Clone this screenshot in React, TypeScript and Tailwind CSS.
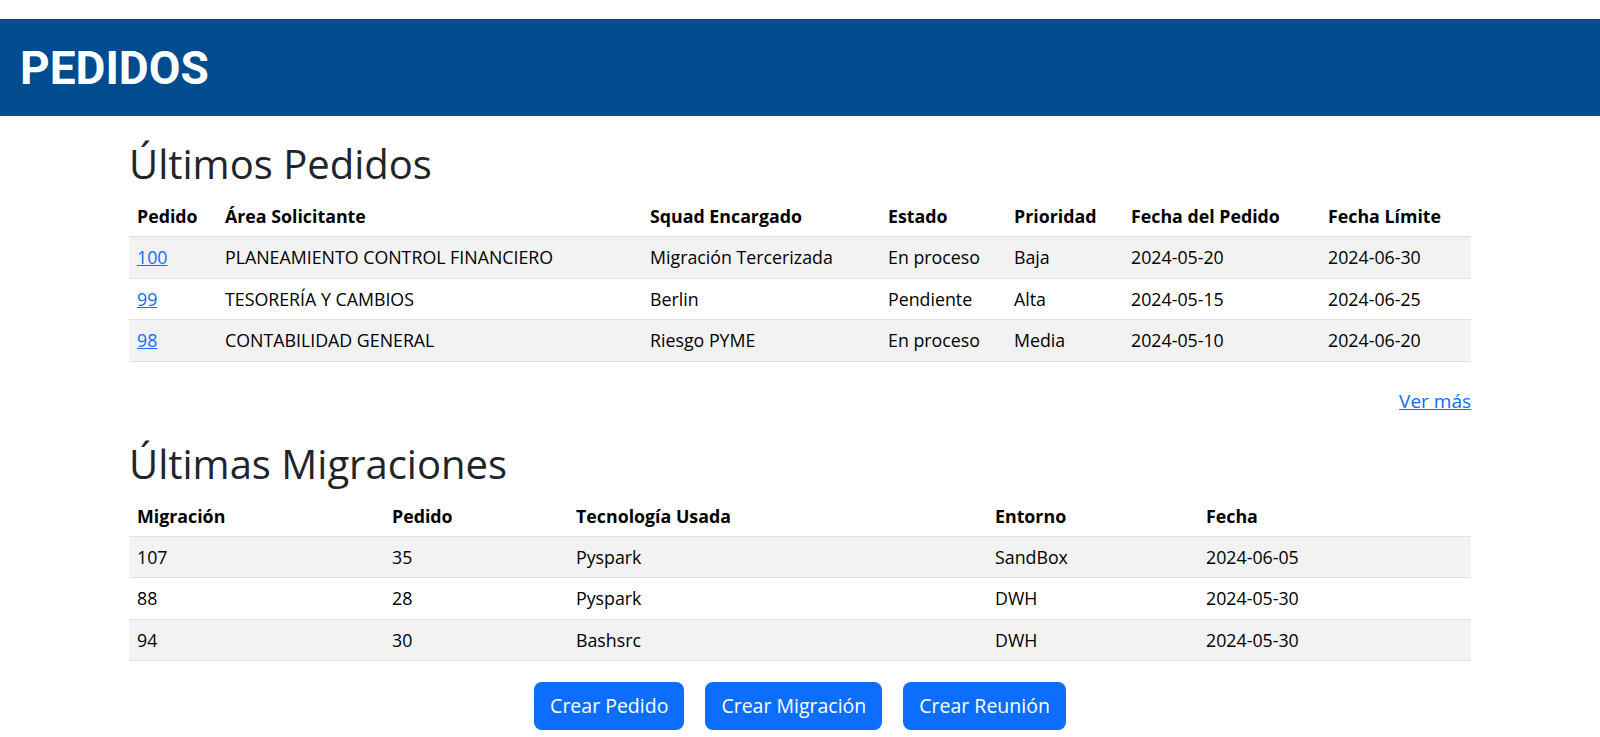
import React from 'react'

const bodyFont = "font-['Open_Sans','Noto_Sans',sans-serif]"

type Col = { label: string; width: string }

const pedidoCols: Col[] = [
  { label: 'Pedido', width: 'w-[88px]' },
  { label: 'Área Solicitante', width: 'w-[425px]' },
  { label: 'Squad Encargado', width: 'w-[238px]' },
  { label: 'Estado', width: 'w-[126px]' },
  { label: 'Prioridad', width: 'w-[117px]' },
  { label: 'Fecha del Pedido', width: 'w-[197px]' },
  { label: 'Fecha Límite', width: 'w-[151px]' },
]

const pedidos = [
  ['100', 'PLANEAMIENTO CONTROL FINANCIERO', 'Migración Tercerizada', 'En proceso', 'Baja', '2024-05-20', '2024-06-30'],
  ['99', 'TESORERÍA Y CAMBIOS', 'Berlin', 'Pendiente', 'Alta', '2024-05-15', '2024-06-25'],
  ['98', 'CONTABILIDAD GENERAL', 'Riesgo PYME', 'En proceso', 'Media', '2024-05-10', '2024-06-20'],
]

const migracionCols: Col[] = [
  { label: 'Migración', width: 'w-[255px]' },
  { label: 'Pedido', width: 'w-[184px]' },
  { label: 'Tecnología Usada', width: 'w-[419px]' },
  { label: 'Entorno', width: 'w-[211px]' },
  { label: 'Fecha', width: 'w-[273px]' },
]

const migraciones = [
  ['107', '35', 'Pyspark', 'SandBox', '2024-06-05'],
  ['88', '28', 'Pyspark', 'DWH', '2024-05-30'],
  ['94', '30', 'Bashsrc', 'DWH', '2024-05-30'],
]

function DataTable({ cols, rows, linkFirst }: { cols: Col[]; rows: string[][]; linkFirst?: boolean }) {
  return (
    <table className="w-full table-fixed border-collapse text-[17.8px] leading-6 text-black">
      <colgroup>
        {cols.map((c) => (
          <col key={c.label} className={c.width} />
        ))}
      </colgroup>
      <thead>
        <tr>
          {cols.map((c) => (
            <th key={c.label} className="px-2 py-2 text-left font-bold border-b border-[#dee2e6] whitespace-nowrap">
              {c.label}
            </th>
          ))}
        </tr>
      </thead>
      <tbody>
        {rows.map((row, i) => (
          <tr key={i} className={i % 2 === 0 ? 'bg-[#f2f2f2]' : 'bg-white'}>
            {row.map((cell, j) => (
              <td key={j} className="px-2 py-2 leading-[24.5px] border-b border-[#dee2e6] whitespace-nowrap">
                {linkFirst && j === 0 ? (
                  <a href="#" className="text-[#0d6efd] underline">
                    {cell}
                  </a>
                ) : (
                  cell
                )}
              </td>
            ))}
          </tr>
        ))}
      </tbody>
    </table>
  )
}

export default function App() {
  return (
    <div className={`min-h-screen bg-white pt-[19px] ${bodyFont}`}>
      {/* Header */}
      <header className="h-[97px] bg-[#004c8f] flex items-center px-[20px]">
        <h1 className="font-['Roboto',sans-serif] font-bold text-[46px] leading-none text-white">PEDIDOS</h1>
      </header>

      <main className="w-[1342px] mx-auto">
        <h2 className="mt-[24px] mb-2 text-[40px] leading-[48px] font-medium text-[#212529]">Últimos Pedidos</h2>
        <DataTable cols={pedidoCols} rows={pedidos} linkFirst />

        <div className="mt-[26px] text-right text-[19px] leading-[26px]">
          <a href="#" className="text-[#0d6efd] underline">
            Ver más
          </a>
        </div>

        <h2 className="mt-[26px] mb-2 text-[40px] leading-[48px] font-medium text-[#212529]">Últimas Migraciones</h2>
        <DataTable cols={migracionCols} rows={migraciones} />

        <div className="mt-[21px] flex justify-center gap-[21px]">
          {['Crear Pedido', 'Crear Migración', 'Crear Reunión'].map((label) => (
            <button
              key={label}
              className="h-[48px] px-4 rounded-lg bg-[#0d6efd] text-white text-[19.5px] leading-[30px]"
            >
              {label}
            </button>
          ))}
        </div>
      </main>
    </div>
  )
}
